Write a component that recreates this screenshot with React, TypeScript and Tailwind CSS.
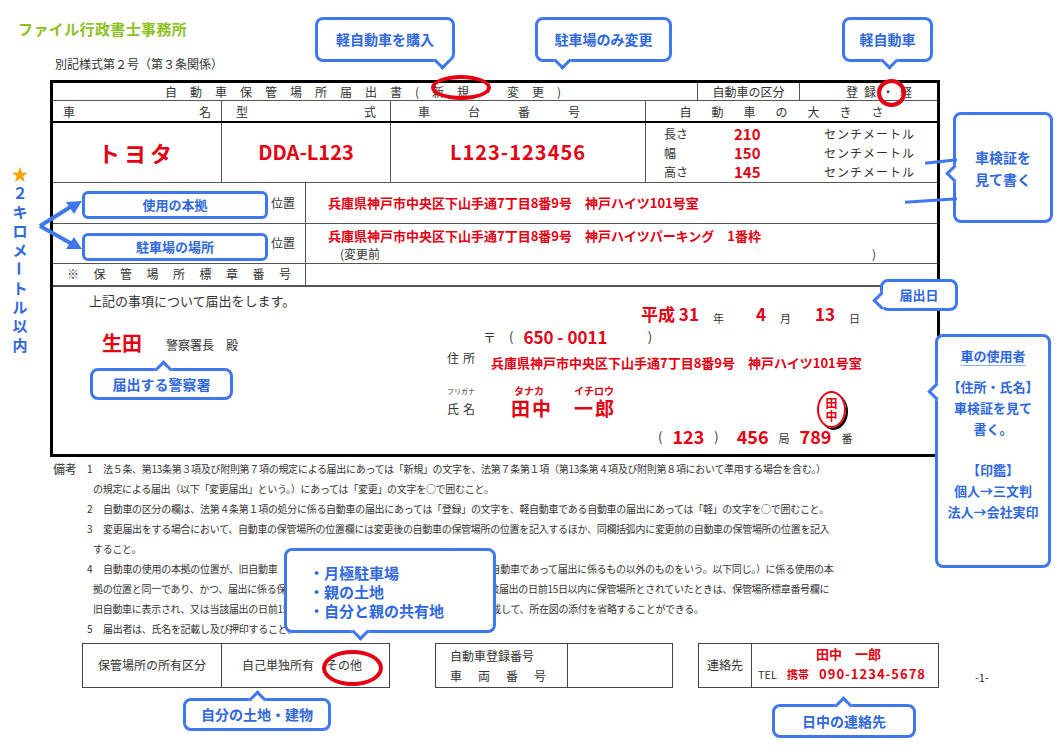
import React from 'react';

const jp = { fontFamily: '"Noto Sans CJK JP", "Noto Sans", sans-serif' };

type Tail = 'down' | 'up' | 'left';

// 吹き出し（青枠）
const Callout: React.FC<{ className: string; tail?: Tail; tailPos?: string; children: React.ReactNode }> = ({
    className,
    tail,
    tailPos = '',
    children,
}) => (
    <div className={`absolute bg-white border-[3px] border-[#3f77ee] rounded-lg text-[#2f68e0] font-bold ${className}`}>
        {children}
        {tail === 'down' && (
            <div className={`absolute -bottom-[8px] w-[13px] h-[13px] bg-white border-b-[3px] border-r-[3px] border-[#3f77ee] rotate-45 ${tailPos}`} />
        )}
        {tail === 'up' && (
            <div className={`absolute -top-[8px] w-[13px] h-[13px] bg-white border-t-[3px] border-l-[3px] border-[#3f77ee] rotate-45 ${tailPos}`} />
        )}
        {tail === 'left' && (
            <div className={`absolute -left-[8px] w-[13px] h-[13px] bg-white border-b-[3px] border-l-[3px] border-[#3f77ee] rotate-45 ${tailPos}`} />
        )}
    </div>
);

const Ring: React.FC<{ className: string }> = ({ className }) => (
    <div className={`absolute border-[4px] border-[#e60012] rounded-[50%] ${className}`} />
);

const notes: [string, string][] = [
    ['1', '法５条、第13条第３項及び附則第７項の規定による届出にあっては「新規」の文字を、法第７条第１項（第13条第４項及び附則第８項において準用する場合を含む。）'],
    ['', 'の規定による届出（以下「変更届出」という。）にあっては「変更」の文字を○で囲むこと。'],
    ['2', '自動車の区分の欄は、法第４条第１項の処分に係る自動車の届出にあっては「登録」の文字を、軽自動車である自動車の届出にあっては「軽」の文字を○で囲むこと。'],
    ['3', '変更届出をする場合において、自動車の保管場所の位置欄には変更後の自動車の保管場所の位置を記入するほか、同欄括弧内に変更前の自動車の保管場所の位置を記入'],
    ['', 'すること。'],
    ['4', '自動車の使用の本拠の位置が、旧自動車（当該届出に係る自動車の使用者が使用していた自動車であって届出に係るもの以外のものをいう。以下同じ。）に係る使用の本'],
    ['', '拠の位置と同一であり、かつ、届出に係る保管場所が旧自動車の保管場所と同一であって当該届出の日前15日以内に保管場所とされていたときは、保管場所標章番号欄に'],
    ['', '旧自動車に表示され、又は当該届出の日前15日以内に表示されていた保管場所標章番号を記載して、所在図の添付を省略することができる。'],
    ['5', '届出者は、氏名を記載し及び押印すること。'],
];

const red = 'text-[#e60012] font-bold';

export default function App() {
    return (
        <div className="relative w-[1064px] h-[750px] bg-white overflow-hidden text-[#333]" style={jp}>
            <div className="pt-[18px] pl-[18px] text-[15px] font-bold text-[#8cc21f] tracking-wide">ファイル行政書士事務所</div>
            <div className="mt-[15px] pl-[55px] text-[12px] leading-[16px]">別記様式第２号（第３条関係）</div>

            {/* 届出書本体 */}
            <div className="ml-[50px] mt-[8px] w-[890px] border-[3px] border-black text-[12px]">
                <div className="flex h-[18px] border-b border-[#555] leading-[17px]">
                    <div className="w-[644px] pl-[112px] tracking-[13px]">自動車保管場所届出書(新規・変更)</div>
                    <div className="w-[103px] border-x border-[#555] text-center">自動車の区分</div>
                    <div className="flex-1 pl-[46px] tracking-[6px]">登録・軽</div>
                </div>
                <div className="flex h-[22px] border-b-2 border-black leading-[21px]">
                    <div className="w-[168px] flex justify-between px-[10px]"><span>車</span><span>名</span></div>
                    <div className="w-[169px] border-l border-[#555] flex justify-between px-[14px]"><span>型</span><span>式</span></div>
                    <div className="w-[255px] border-l border-[#555] text-center tracking-[38px]">車台番号</div>
                    <div className="flex-1 border-l border-[#555] text-center tracking-[20px]">自動車の大きさ</div>
                </div>
                <div className="flex h-[60px] border-b border-[#555]">
                    <div className={`w-[168px] flex items-center justify-center text-[22px] tracking-[4px] ${red}`}>トヨタ</div>
                    <div className={`w-[169px] border-l border-[#555] flex items-center justify-center text-[20px] ${red}`}>DDA-L123</div>
                    <div className={`w-[255px] border-l border-[#555] flex items-center justify-center text-[20px] tracking-[1px] ${red}`}>L123-123456</div>
                    <div className="flex-1 border-l border-[#555] pt-[1px] pl-[18px] leading-[19px]">
                        {[
                            ['長さ', '210'],
                            ['幅', '150'],
                            ['高さ', '145'],
                        ].map(([k, v]) => (
                            <div key={k} className="flex">
                                <span className="w-[70px]">{k}</span>
                                <span className={`w-[90px] text-[15px] ${red}`}>{v}</span>
                                <span className="tracking-[1px]">センチメートル</span>
                            </div>
                        ))}
                    </div>
                </div>
                <div className="flex h-[41px] border-b border-[#555]">
                    <div className="w-[253px] border-r border-[#555] flex items-center justify-end pr-[10px]">位置</div>
                    <div className={`flex-1 flex items-center pl-[22px] text-[13px] ${red}`}>兵庫県神戸市中央区下山手通7丁目8番9号　神戸ハイツ101号室</div>
                </div>
                <div className="flex h-[40px] border-b border-[#555]">
                    <div className="w-[253px] border-r border-[#555] flex items-center justify-end pr-[10px]">位置</div>
                    <div className="flex-1 pl-[22px] pt-[3px] leading-[18px]">
                        <div className={`text-[13px] ${red}`}>兵庫県神戸市中央区下山手通7丁目8番9号　神戸ハイツパーキング　1番枠</div>
                        <div className="flex pl-[12px] text-[12px]"><span className="w-[532px]">(変更前</span><span>)</span></div>
                    </div>
                </div>
                <div className="flex h-[23px] border-b-2 border-[#555]">
                    <div className="w-[253px] border-r border-[#555] flex items-center justify-between px-[14px]">
                        {'※保管場所標章番号'.split('').map((c, i) => (
                            <span key={i}>{c}</span>
                        ))}
                    </div>
                </div>
                <div className="h-[167px] flex">
                    <div className="w-[390px] pl-[36px] pt-[4px]">
                        <div className="text-[13px]">上記の事項について届出をします。</div>
                        <div className="mt-[18px] pl-[13px] flex items-end gap-[24px]">
                            <span className={`text-[20px] ${red}`}>生田</span>
                            <span className="text-[12px] pb-[4px]">警察署長　殿</span>
                        </div>
                    </div>
                    <div className="flex-1 relative">
                        <div className="h-[40px] pl-[198px] flex items-end gap-[14px] text-[11px]">
                            <span className={`text-[17px] ${red}`}>平成 31</span><span>年</span>
                            <span className={`text-[17px] ml-[18px] ${red}`}>4</span><span>月</span>
                            <span className={`text-[17px] ml-[10px] ${red}`}>13</span><span>日</span>
                        </div>
                        <div className="h-[20px] pl-[40px] flex items-center text-[13px]">
                            <span>〒　(</span>
                            <span className={`ml-[10px] text-[17px] ${red}`}>650 - 0011</span>
                            <span className="ml-[40px]">)</span>
                        </div>
                        <div className="h-[26px] pl-[4px] flex items-end">
                            <span className="w-[44px] text-[12px] tracking-[4px] self-start pt-[2px]">住所</span>
                            <span className={`text-[13px] ${red}`}>兵庫県神戸市中央区下山手通7丁目8番9号　神戸ハイツ101号室</span>
                        </div>
                        <div className="h-[24px] pl-[4px] flex items-end text-[10px] leading-[12px]">
                            <span className="w-[67px] text-[7px]">フリガナ</span>
                            <span className={`w-[60px] ${red}`}>タナカ</span>
                            <span className={red}>イチロウ</span>
                        </div>
                        <div className="h-[24px] pl-[4px] flex items-center">
                            <span className="w-[64px] text-[12px] tracking-[4px]">氏名</span>
                            <span className={`text-[19px] tracking-[2px] ${red}`}>田中　一郎</span>
                        </div>
                        <div className="absolute left-[374px] top-[104px] w-[29px] h-[37px] rounded-[50%] border-[2px] border-[#e60012] shadow-[2px_2px_0_#000] flex flex-col items-center justify-center text-[#e60012] font-bold text-[12px] leading-[13px]">
                            <span>田</span><span>中</span>
                        </div>
                        <div className="h-[26px] pl-[215px] flex items-end gap-[10px] text-[13px]">
                            <span>(</span><span className={`text-[18px] leading-[22px] ${red}`}>123</span><span>)</span>
                            <span className={`text-[18px] leading-[22px] ml-[8px] ${red}`}>456</span><span className="text-[11px]">局</span>
                            <span className={`text-[18px] leading-[22px] ${red}`}>789</span><span className="text-[11px]">番</span>
                        </div>
                    </div>
                </div>
            </div>

            {/* 備考 */}
            <div className="flex pl-[53px] mt-[2px] text-[10px] leading-[20px] whitespace-nowrap tracking-[-0.3px]">
                <span className="w-[34px] text-[12px]">備考</span>
                <div>
                    {notes.map(([n, t], i) => (
                        <div key={i} className="flex">
                            <span className={n ? 'w-[16px]' : 'w-[6px]'}>{n}</span>
                            <span>{t}</span>
                        </div>
                    ))}
                </div>
            </div>

            {/* 下部の表 */}
            <div className="flex items-start mt-[4px] pl-[82px] text-[12px]">
                <div className="flex h-[45px] w-[308px] border border-[#444]">
                    <div className="w-[139px] border-r border-[#444] flex items-center justify-center">保管場所の所有区分</div>
                    <div className="flex-1 flex items-center pl-[20px]">自己単独所有　その他</div>
                </div>
                <div className="flex h-[45px] w-[238px] ml-[45px] border border-[#444]">
                    <div className="w-[132px] border-r border-[#444] pl-[14px] pt-[2px] leading-[20px]">
                        <div>自動車登録番号</div>
                        <div className="tracking-[16px]">車両番号</div>
                    </div>
                </div>
                <div className="flex h-[45px] w-[241px] ml-[25px] border border-[#444]">
                    <div className="w-[53px] border-r border-[#444] flex items-center justify-center">連絡先</div>
                    <div className="flex-1 pl-[6px] leading-[20px]">
                        <div className={`pl-[58px] text-[13px] ${red}`}>田中　一郎</div>
                        <div className="flex items-center gap-[10px]">
                            <span className="text-[11px]">TEL</span>
                            <span className={`text-[11px] ${red}`}>携帯</span>
                            <span className={`text-[13px] tracking-[1px] ${red}`}>090-1234-5678</span>
                        </div>
                    </div>
                </div>
                <span className="ml-[36px] mt-[26px] text-[11px]">-1-</span>
            </div>

            {/* 赤丸 */}
            <Ring className="left-[431px] top-[75px] w-[60px] h-[25px]" />
            <Ring className="left-[877px] top-[79px] w-[29px] h-[28px]" />
            <Ring className="left-[322px] top-[650px] w-[61px] h-[36px]" />

            {/* 左側の注記 */}
            <div className="absolute left-[10px] top-[164px] w-[20px] flex flex-col items-center text-[15px] font-bold leading-[19px] text-[#2f68e0]">
                <span className="text-[#f5a300] text-[17px]">★</span>
                {'２キロメートル以内'.split('').map((c, i) => (
                    <span key={i} className={c === 'ー' ? 'rotate-90' : ''}>{c}</span>
                ))}
            </div>
            <svg className="absolute left-[36px] top-[196px]" width="50" height="60" viewBox="0 0 50 60">
                <path d="M4 30 L36 10 M4 30 L36 48" stroke="#3f77ee" strokeWidth="4" fill="none" />
                <path d="M46 5 L30 6 L38 18 Z M46 53 L38 41 L30 53 Z" fill="#3f77ee" />
            </svg>

            <Callout className="left-[315px] top-[17px] w-[140px] h-[45px] flex items-center justify-center text-[14px]" tail="down" tailPos="left-[118px]">
                軽自動車を購入
            </Callout>
            <Callout className="left-[535px] top-[17px] w-[137px] h-[45px] flex items-center justify-center text-[14px]" tail="down" tailPos="left-[18px]">
                駐車場のみ変更
            </Callout>
            <Callout className="left-[842px] top-[17px] w-[91px] h-[45px] flex items-center justify-center text-[14px]" tail="down" tailPos="left-[38px]">
                軽自動車
            </Callout>
            <Callout className="left-[953px] top-[112px] w-[100px] h-[111px] flex items-center justify-center text-center text-[14px] leading-[22px]" tail="left" tailPos="top-[52px]">
                車検証を<br />見て書く
            </Callout>
            <div className="absolute left-[905px] top-[199px] w-[52px] h-[3px] bg-[#3f77ee] rotate-[-4deg]" />
            <div className="absolute left-[925px] top-[160px] w-[32px] h-[3px] bg-[#3f77ee] rotate-[-6deg]" />
            <Callout className="left-[82px] top-[191px] w-[186px] h-[28px] flex items-center justify-center text-[13px] rounded-md">
                使用の本拠
            </Callout>
            <Callout className="left-[82px] top-[233px] w-[186px] h-[28px] flex items-center justify-center text-[13px] rounded-md">
                駐車場の場所
            </Callout>
            <Callout className="left-[880px] top-[279px] w-[78px] h-[32px] flex items-center justify-center text-[13px]" tail="left" tailPos="top-[12px]">
                届出日
            </Callout>
            <Callout className="left-[935px] top-[334px] w-[116px] h-[234px] text-center text-[13px] leading-[21px] pt-[8px]" tail="left" tailPos="top-[48px]">
                <div className="underline underline-offset-4 decoration-[#8fb0f5]">車の使用者</div>
                <div className="mt-[10px]">【住所・氏名】<br />車検証を見て<br />書く。</div>
                <div className="mt-[20px]">【印鑑】<br />個人→三文判<br />法人→会社実印</div>
            </Callout>
            <Callout className="left-[90px] top-[368px] w-[143px] h-[32px] flex items-center justify-center text-[14px]" tail="up" tailPos="left-[64px]">
                届出する警察署
            </Callout>
            <Callout className="left-[284px] top-[548px] w-[212px] h-[85px] pl-[22px] pt-[12px] text-[15px] leading-[19px]" tail="down" tailPos="left-[67px]">
                <div>・月極駐車場</div>
                <div>・親の土地</div>
                <div>・自分と親の共有地</div>
            </Callout>
            <Callout className="left-[183px] top-[698px] w-[148px] h-[33px] flex items-center justify-center text-[14px]" tail="up" tailPos="left-[65px]">
                自分の土地・建物
            </Callout>
            <Callout className="left-[772px] top-[704px] w-[144px] h-[34px] flex items-center justify-center text-[14px]" tail="up" tailPos="left-[62px]">
                日中の連絡先
            </Callout>
        </div>
    );
}
